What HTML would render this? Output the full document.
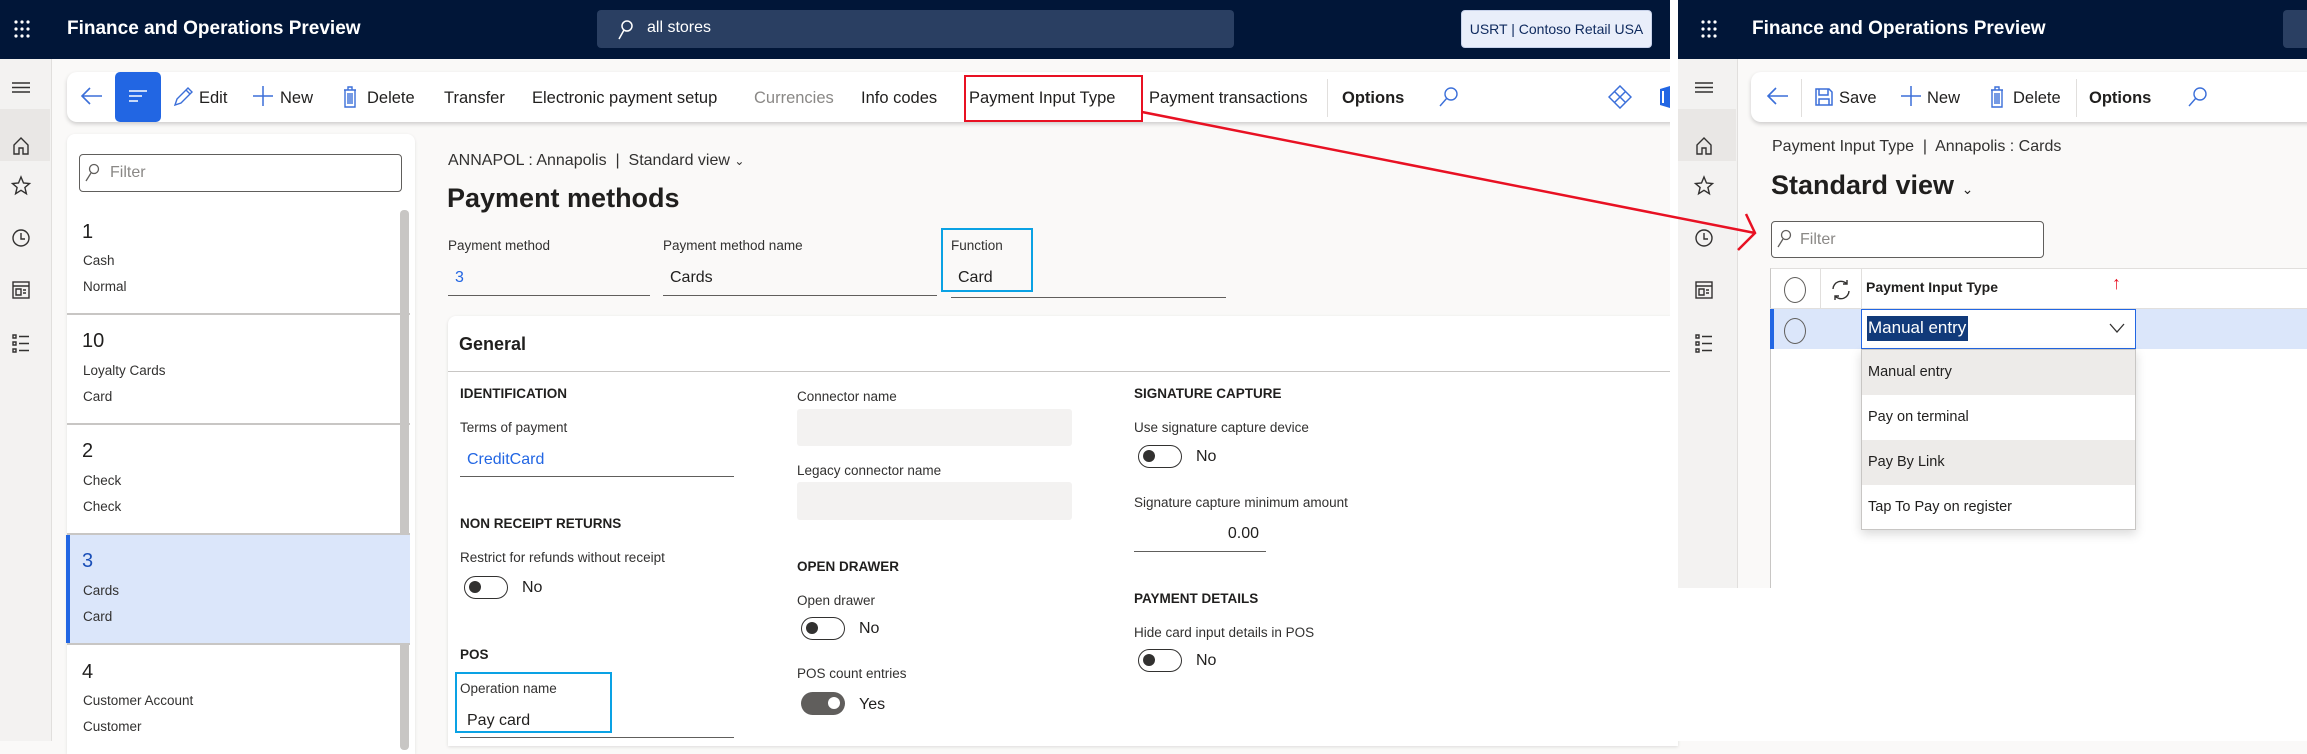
<!DOCTYPE html>
<html><head><meta charset="utf-8">
<style>
*{box-sizing:border-box;margin:0;padding:0}
body{width:2307px;height:741px;overflow:hidden;background:#faf9f8;font-family:"Liberation Sans",sans-serif;color:#201f1e;position:relative}
.a{position:absolute;white-space:nowrap}
.top{background:#011638;height:59px}
.t{color:#fff;font-weight:bold;font-size:19px;line-height:22px}
.bar{background:#fff;border-radius:10px;box-shadow:0 2px 4px rgba(0,0,0,.18)}
.ab{font-size:16.5px;line-height:20px;color:#201f1e}
.lbl{font-size:13.5px;color:#323130;line-height:16px}
.val{font-size:16px;line-height:20px}
.sec{font-size:13.5px;font-weight:bold;line-height:16px}
.ul{height:1px;background:#605e5c}
.tog{width:44px;height:23px;border:1.5px solid #323130;border-radius:12px}
.tog:after{content:"";position:absolute;left:4px;top:4px;width:12px;height:12px;border-radius:50%;background:#323130}
.rail{background:#f3f2f1;border-right:1px solid #e1dfdd}
</style></head><body>

<!-- LEFT PANE -->
<div class="a top" style="left:0;top:0;width:1670px"></div>
<svg class="a" style="left:14px;top:19px" width="16" height="20"><g fill="#fff"><circle cx="2" cy="3" r="1.6"/><circle cx="8" cy="3" r="1.6"/><circle cx="14" cy="3" r="1.6"/><circle cx="2" cy="10" r="1.6"/><circle cx="8" cy="10" r="1.6"/><circle cx="14" cy="10" r="1.6"/><circle cx="2" cy="17" r="1.6"/><circle cx="8" cy="17" r="1.6"/><circle cx="14" cy="17" r="1.6"/></g></svg>
<div class="a t" style="left:67px;top:18px">Finance and Operations Preview</div>
<div class="a" style="left:597px;top:10px;width:637px;height:38px;background:#2a3f62;border-radius:4px"></div>
<svg class="a" style="left:617px;top:20px" width="16" height="20"><circle cx="10" cy="6" r="5" fill="none" stroke="#fff" stroke-width="1.5"/><path d="M7 10 L2 19" stroke="#fff" stroke-width="1.5"/></svg>
<div class="a" style="left:647px;top:19px;color:#fff;font-size:16px">all stores</div>
<div class="a" style="left:1461px;top:10px;width:191px;height:38px;background:#e9eefa;border-radius:4px;border:1px solid #c8d2ea;color:#0f2a5e;font-size:14px;line-height:36px;text-align:center">USRT | Contoso Retail USA</div>

<div class="a rail" style="left:0;top:59px;width:52px;height:682px"></div>
<div class="a" style="left:0;top:109px;width:50px;height:52px;background:#e9e7e5"></div>
<svg class="a" style="left:0;top:59px" width="52" height="682" fill="none" stroke="#323130" stroke-width="1.4">
<path d="M12 24h18M12 28.5h18M12 33h18"/>
<path d="M14 86l7-7 7 7v9h-5v-6h-4v6h-5z"/>
<path d="M21 118l2.5 6 6 .5-4.6 4 1.5 6.2-5.4-3.4-5.4 3.4 1.5-6.2-4.6-4 6-.5z"/>
<circle cx="21" cy="179" r="8"/><path d="M21 174v6h4"/>
<rect x="13" y="223" width="16" height="16"/><path d="M13 227h16M16 230h5v6h-5zM23 231h3M23 234h3"/>
<path d="M13 276h3v3h-3zM13 283h3v3h-3zM13 290h3v3h-3zM19 277.5h10M19 284.5h10M19 291.5h10"/>
</svg>

<div class="a bar" style="left:67px;top:72px;width:1610px;height:50px;border-radius:10px 0 0 10px"></div>
<svg class="a" style="left:80px;top:84px" width="24" height="24" fill="none" stroke="#3b6fd9" stroke-width="1.6"><path d="M22 12H3M10 4l-8 8 8 8"/></svg>
<div class="a" style="left:115px;top:72px;width:46px;height:50px;background:#2266e3;border-radius:5px"></div>
<svg class="a" style="left:126px;top:88px" width="24" height="16" stroke="#fff" stroke-width="1.6"><path d="M3 3h18M3 8h13M3 13h9"/></svg>
<svg class="a" style="left:172px;top:84px" width="22" height="24" fill="none" stroke="#3b6fd9" stroke-width="1.4"><path d="M3 21l2-6L16 4l4 4L9 19z M14 6l4 4"/></svg>
<div class="a ab" style="left:199px;top:88px">Edit</div>
<svg class="a" style="left:252px;top:85px" width="22" height="22" stroke="#3b6fd9" stroke-width="1.5"><path d="M11 1v20M1 11h20"/></svg>
<div class="a ab" style="left:280px;top:88px">New</div>
<svg class="a" style="left:342px;top:84px" width="16" height="26" fill="none" stroke="#3b6fd9" stroke-width="1.4"><path d="M2 6h12M6 6V3h4v3M3 6v17h10V6M6 9v11M8 9v11M10 9v11"/></svg>
<div class="a ab" style="left:367px;top:88px">Delete</div>
<div class="a ab" style="left:444px;top:88px">Transfer</div>
<div class="a ab" style="left:532px;top:88px">Electronic payment setup</div>
<div class="a ab" style="left:754px;top:88px;color:#8a8886">Currencies</div>
<div class="a ab" style="left:861px;top:88px">Info codes</div>
<div class="a ab" style="left:969px;top:88px">Payment Input Type</div>
<div class="a" style="left:964px;top:75px;width:179px;height:47px;border:2.5px solid #e81123"></div>
<div class="a ab" style="left:1149px;top:88px">Payment transactions</div>
<div class="a" style="left:1327px;top:79px;width:1px;height:38px;background:#e1dfdd"></div>
<div class="a ab" style="left:1342px;top:88px;font-weight:bold">Options</div>
<svg class="a" style="left:1438px;top:86px" width="22" height="22" fill="none" stroke="#3b6fd9" stroke-width="1.4"><circle cx="13" cy="8" r="6"/><path d="M9 12L2 20"/></svg>
<svg class="a" style="left:1608px;top:85px" width="24" height="24" fill="none" stroke="#3b6fd9" stroke-width="1.5"><path d="M12 1l11 11-11 11L1 12z M6.5 6.5l11 11M17.5 6.5l-11 11"/></svg>
<svg class="a" style="left:1657px;top:85px" width="13" height="24"><path d="M3 4l10-3v22l-10-3z" fill="#2266e3"/><path d="M6 6v12" stroke="#fff" stroke-width="2"/></svg>

<!-- list panel -->
<div class="a" style="left:67px;top:134px;width:348px;height:620px;background:#fff;border-radius:8px 8px 0 0;box-shadow:0 1px 3px rgba(0,0,0,.1)"></div>
<div class="a" style="left:79px;top:154px;width:323px;height:38px;border:1.5px solid #605e5c;border-radius:4px"></div>
<svg class="a" style="left:84px;top:163px" width="16" height="20" fill="none" stroke="#605e5c" stroke-width="1.3"><circle cx="10" cy="6" r="4.5"/><path d="M7 10l-5 8"/></svg>
<div class="a" style="left:110px;top:164px;color:#8a8886;font-size:16px">Filter</div>
<div class="a" style="left:400px;top:210px;width:9px;height:540px;background:#c8c6c4;border-radius:4px"></div>
<div class="a" style="left:67px;top:313px;width:343px;height:2px;background:#c8c6c4"></div>
<div class="a" style="left:67px;top:423px;width:343px;height:2px;background:#c8c6c4"></div>
<div class="a" style="left:67px;top:533px;width:343px;height:2px;background:#c8c6c4"></div>
<div class="a" style="left:67px;top:535px;width:343px;height:108px;background:#dbe6fa"></div>
<div class="a" style="left:66px;top:535px;width:4px;height:108px;background:#2266e3"></div>
<div class="a" style="left:67px;top:643px;width:343px;height:2px;background:#c8c6c4"></div>
<div class="a" style="left:82px;top:221px;font-size:20px">1</div>
<div class="a lbl" style="left:83px;top:253px">Cash</div>
<div class="a lbl" style="left:83px;top:279px">Normal</div>
<div class="a" style="left:82px;top:330px;font-size:20px">10</div>
<div class="a lbl" style="left:83px;top:363px">Loyalty Cards</div>
<div class="a lbl" style="left:83px;top:389px">Card</div>
<div class="a" style="left:82px;top:440px;font-size:20px">2</div>
<div class="a lbl" style="left:83px;top:473px">Check</div>
<div class="a lbl" style="left:83px;top:499px">Check</div>
<div class="a" style="left:82px;top:550px;font-size:20px;color:#1a4fb8">3</div>
<div class="a lbl" style="left:83px;top:583px">Cards</div>
<div class="a lbl" style="left:83px;top:609px">Card</div>
<div class="a" style="left:82px;top:661px;font-size:20px">4</div>
<div class="a lbl" style="left:83px;top:693px">Customer Account</div>
<div class="a lbl" style="left:83px;top:719px">Customer</div>

<!-- main -->
<div class="a" style="left:448px;top:152px;font-size:16px;color:#323130">ANNAPOL : Annapolis &nbsp;|&nbsp; Standard view <span style="font-size:12px">&#8964;</span></div>
<div class="a" style="left:447px;top:183px;font-size:27px;font-weight:bold;color:#201f1e">Payment methods</div>
<div class="a lbl" style="left:448px;top:238px">Payment method</div>
<div class="a lbl" style="left:663px;top:238px">Payment method name</div>
<div class="a lbl" style="left:951px;top:238px">Function</div>
<div class="a val" style="left:455px;top:268px;color:#2266e3">3</div>
<div class="a val" style="left:670px;top:268px">Cards</div>
<div class="a val" style="left:958px;top:268px">Card</div>
<div class="a ul" style="left:448px;top:295px;width:202px"></div>
<div class="a ul" style="left:663px;top:295px;width:274px"></div>
<div class="a ul" style="left:951px;top:297px;width:275px"></div>
<div class="a" style="left:941px;top:228px;width:92px;height:64px;border:2.5px solid #0aa2e4"></div>

<div class="a" style="left:448px;top:316px;width:1230px;height:430px;background:#fff;border-radius:8px 0 0 0;box-shadow:0 1px 3px rgba(0,0,0,.12)"></div>
<div class="a" style="left:459px;top:334px;font-size:18px;font-weight:bold">General</div>
<div class="a" style="left:448px;top:371px;width:1222px;height:1px;background:#c8c6c4"></div>

<div class="a sec" style="left:460px;top:386px">IDENTIFICATION</div>
<div class="a lbl" style="left:460px;top:420px">Terms of payment</div>
<div class="a val" style="left:467px;top:450px;color:#2266e3">CreditCard</div>
<div class="a ul" style="left:460px;top:476px;width:274px"></div>
<div class="a sec" style="left:460px;top:516px">NON RECEIPT RETURNS</div>
<div class="a lbl" style="left:460px;top:550px">Restrict for refunds without receipt</div>
<div class="a tog" style="left:464px;top:576px"></div>
<div class="a val" style="left:522px;top:578px">No</div>
<div class="a sec" style="left:460px;top:647px">POS</div>
<div class="a lbl" style="left:460px;top:681px">Operation name</div>
<div class="a val" style="left:467px;top:711px">Pay card</div>
<div class="a ul" style="left:460px;top:737px;width:274px"></div>
<div class="a" style="left:455px;top:672px;width:157px;height:61px;border:2.5px solid #0aa2e4"></div>

<div class="a lbl" style="left:797px;top:389px">Connector name</div>
<div class="a" style="left:797px;top:409px;width:275px;height:37px;background:#f3f2f1;border-radius:3px"></div>
<div class="a lbl" style="left:797px;top:463px">Legacy connector name</div>
<div class="a" style="left:797px;top:482px;width:275px;height:38px;background:#f3f2f1;border-radius:3px"></div>
<div class="a sec" style="left:797px;top:559px">OPEN DRAWER</div>
<div class="a lbl" style="left:797px;top:593px">Open drawer</div>
<div class="a tog" style="left:801px;top:617px"></div>
<div class="a val" style="left:859px;top:619px">No</div>
<div class="a lbl" style="left:797px;top:666px">POS count entries</div>
<div class="a" style="left:801px;top:692px;width:44px;height:23px;border-radius:12px;background:#605e5c"></div>
<div class="a" style="left:828px;top:697px;width:12px;height:12px;border-radius:50%;background:#fff"></div>
<div class="a val" style="left:859px;top:695px">Yes</div>

<div class="a sec" style="left:1134px;top:386px">SIGNATURE CAPTURE</div>
<div class="a lbl" style="left:1134px;top:420px">Use signature capture device</div>
<div class="a tog" style="left:1138px;top:445px"></div>
<div class="a val" style="left:1196px;top:447px">No</div>
<div class="a lbl" style="left:1134px;top:495px">Signature capture minimum amount</div>
<div class="a val" style="left:1134px;top:524px;width:125px;text-align:right">0.00</div>
<div class="a ul" style="left:1134px;top:551px;width:132px"></div>
<div class="a sec" style="left:1134px;top:591px">PAYMENT DETAILS</div>
<div class="a lbl" style="left:1134px;top:625px">Hide card input details in POS</div>
<div class="a tog" style="left:1138px;top:649px"></div>
<div class="a val" style="left:1196px;top:651px">No</div>

<!-- separator -->
<div class="a" style="left:1670px;top:0;width:8px;height:741px;background:#fff"></div>

<!-- RIGHT PANE -->
<div class="a" style="left:1678px;top:0;width:629px;height:588px;background:#faf9f8"></div>
<div class="a" style="left:1678px;top:588px;width:629px;height:153px;background:#fff"></div>
<div class="a top" style="left:1678px;top:0;width:629px"></div>
<svg class="a" style="left:1701px;top:19px" width="16" height="20"><g fill="#fff"><circle cx="2" cy="3" r="1.6"/><circle cx="8" cy="3" r="1.6"/><circle cx="14" cy="3" r="1.6"/><circle cx="2" cy="10" r="1.6"/><circle cx="8" cy="10" r="1.6"/><circle cx="14" cy="10" r="1.6"/><circle cx="2" cy="17" r="1.6"/><circle cx="8" cy="17" r="1.6"/><circle cx="14" cy="17" r="1.6"/></g></svg>
<div class="a t" style="left:1752px;top:18px">Finance and Operations Preview</div>
<div class="a" style="left:2283px;top:10px;width:30px;height:38px;background:#2a3f62;border-radius:4px"></div>

<div class="a rail" style="left:1678px;top:59px;width:60px;height:529px"></div>
<div class="a" style="left:1678px;top:109px;width:58px;height:52px;background:#e9e7e5"></div>
<svg class="a" style="left:1683px;top:59px" width="52" height="529" fill="none" stroke="#323130" stroke-width="1.4">
<path d="M12 24h18M12 28.5h18M12 33h18"/>
<path d="M14 86l7-7 7 7v9h-5v-6h-4v6h-5z"/>
<path d="M21 118l2.5 6 6 .5-4.6 4 1.5 6.2-5.4-3.4-5.4 3.4 1.5-6.2-4.6-4 6-.5z"/>
<circle cx="21" cy="179" r="8"/><path d="M21 174v6h4"/>
<rect x="13" y="223" width="16" height="16"/><path d="M13 227h16M16 230h5v6h-5zM23 231h3M23 234h3"/>
<path d="M13 276h3v3h-3zM13 283h3v3h-3zM13 290h3v3h-3zM19 277.5h10M19 284.5h10M19 291.5h10"/>
</svg>

<div class="a bar" style="left:1751px;top:72px;width:570px;height:50px"></div>
<svg class="a" style="left:1766px;top:84px" width="24" height="24" fill="none" stroke="#3b6fd9" stroke-width="1.6"><path d="M22 12H3M10 4l-8 8 8 8"/></svg>
<div class="a" style="left:1801px;top:79px;width:1px;height:38px;background:#e1dfdd"></div>
<svg class="a" style="left:1814px;top:87px" width="20" height="20" fill="none" stroke="#3b6fd9" stroke-width="1.5"><path d="M2 2h13l3 3v13H2z M5 2v6h9V2 M5 18v-6h10v6"/></svg>
<div class="a ab" style="left:1839px;top:88px">Save</div>
<svg class="a" style="left:1900px;top:85px" width="22" height="22" stroke="#3b6fd9" stroke-width="1.5"><path d="M11 1v20M1 11h20"/></svg>
<div class="a ab" style="left:1927px;top:88px">New</div>
<svg class="a" style="left:1989px;top:84px" width="16" height="26" fill="none" stroke="#3b6fd9" stroke-width="1.4"><path d="M2 6h12M6 6V3h4v3M3 6v17h10V6M6 9v11M8 9v11M10 9v11"/></svg>
<div class="a ab" style="left:2013px;top:88px">Delete</div>
<div class="a" style="left:2076px;top:79px;width:1px;height:38px;background:#e1dfdd"></div>
<div class="a ab" style="left:2089px;top:88px;font-weight:bold">Options</div>
<svg class="a" style="left:2187px;top:86px" width="22" height="22" fill="none" stroke="#3b6fd9" stroke-width="1.4"><circle cx="13" cy="8" r="6"/><path d="M9 12L2 20"/></svg>

<div class="a" style="left:1772px;top:138px;font-size:16px;color:#323130">Payment Input Type &nbsp;|&nbsp; Annapolis : Cards</div>
<div class="a" style="left:1771px;top:170px;font-size:27px;font-weight:bold">Standard view <span style="font-size:14px;font-weight:normal">&#8964;</span></div>
<div class="a" style="left:1771px;top:221px;width:273px;height:37px;border:1.5px solid #605e5c;border-radius:4px;background:#fff"></div>
<svg class="a" style="left:1776px;top:229px" width="16" height="20" fill="none" stroke="#605e5c" stroke-width="1.3"><circle cx="10" cy="6" r="4.5"/><path d="M7 10l-5 8"/></svg>
<div class="a" style="left:1800px;top:231px;color:#8a8886;font-size:16px">Filter</div>

<div class="a" style="left:1770px;top:268px;width:537px;height:320px;background:#fff;border-left:1px solid #c8c6c4;border-top:1px solid #e1dfdd"></div>
<div class="a" style="left:1770px;top:308px;width:537px;height:1px;background:#e1dfdd"></div>
<div class="a" style="left:1820px;top:268px;width:1px;height:81px;background:#e1dfdd"></div>
<div class="a" style="left:1861px;top:268px;width:1px;height:40px;background:#e1dfdd"></div>
<div class="a" style="left:1771px;top:309px;width:536px;height:40px;background:#dbe6fa"></div>
<div class="a" style="left:1770px;top:309px;width:4px;height:40px;background:#2266e3"></div>
<div class="a" style="left:1784px;top:277px;width:22px;height:26px;border:1.3px solid #605e5c;border-radius:50%"></div>
<div class="a" style="left:1784px;top:318px;width:22px;height:26px;border:1.3px solid #605e5c;border-radius:50%"></div>
<svg class="a" style="left:1829px;top:278px" width="24" height="24" fill="none" stroke="#323130" stroke-width="1.4"><path d="M4 11a8 8 0 0 1 14-5M20 13a8 8 0 0 1-14 5M18 2v4h-4M6 22v-4h4"/></svg>
<div class="a" style="left:1866px;top:279px;font-size:14px;font-weight:bold">Payment Input Type</div>
<div class="a" style="left:2112px;top:273px;font-size:18px;color:#e81123">&#8593;</div>
<div class="a" style="left:1861px;top:309px;width:275px;height:40px;background:#fff;border:1.5px solid #2266e3"></div>
<div class="a" style="left:1867px;top:316px;width:101px;height:25px;background:#113a7a"></div>
<div class="a" style="left:1868px;top:318px;font-size:17px;color:#fff">Manual entry</div>
<svg class="a" style="left:2109px;top:322px" width="16" height="12" fill="none" stroke="#323130" stroke-width="1.3"><path d="M1 2l7 8 7-8"/></svg>

<div class="a" style="left:1861px;top:349px;width:275px;height:181px;background:#fff;border:1px solid #c8c6c4;box-shadow:0 4px 10px rgba(0,0,0,.15)"></div>
<div class="a" style="left:1862px;top:350px;width:273px;height:45px;background:#edebe9"></div>
<div class="a" style="left:1862px;top:440px;width:273px;height:45px;background:#edebe9"></div>
<div class="a" style="left:1868px;top:364px;font-size:14.5px">Manual entry</div>
<div class="a" style="left:1868px;top:409px;font-size:14.5px">Pay on terminal</div>
<div class="a" style="left:1868px;top:454px;font-size:14.5px">Pay By Link</div>
<div class="a" style="left:1868px;top:499px;font-size:14.5px">Tap To Pay on register</div>

<!-- red arrow -->
<svg class="a" style="left:0;top:0" width="2307" height="741" fill="none" stroke="#e81123" stroke-width="2.5"><path d="M1142 112 L1755 233 M1746 214 L1755 233 L1738 250"/></svg>
</body></html>
